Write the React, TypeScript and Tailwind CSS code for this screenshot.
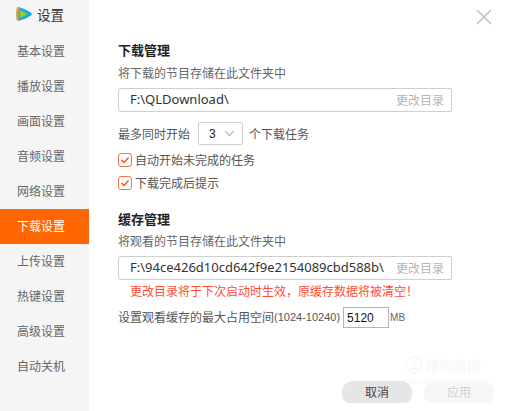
import { X } from "lucide-react";

const navItems = ["基本设置", "播放设置", "画面设置", "音频设置", "网络设置", "下载设置", "上传设置", "热键设置", "高级设置", "自动关机"];

const fontFamily = "font-['Noto_Sans_CJK_SC','Liberation_Sans',sans-serif]";

function PathRow({ path }: { path: string }) {
  return (
    <div className="flex h-[24px] w-[334px] items-center justify-between rounded-[2px] border border-[#cfcfcf] pl-[11px] pr-[7px]">
      <span className="text-[13px] text-[#333] font-['Noto_Sans',sans-serif]">{path}</span>
      <span className="text-[12px] text-[#b5b5b5]">更改目录</span>
    </div>
  );
}

function CheckRow({ label }: { label: string }) {
  return (
    <div className="flex items-center gap-[3px]">
      <span className="flex h-[14px] w-[14px] items-center justify-center rounded-[3px] border border-[#f0734a]">
        <svg width="10" height="10" viewBox="0 0 10 10" fill="none" stroke="#f0582a" strokeWidth="1.5">
          <path d="M1.5 5 L4 7.5 L8.5 2.5" />
        </svg>
      </span>
      <span className="text-[12px] leading-[14px] text-[#555]">{label}</span>
    </div>
  );
}

export default function App() {
  return (
    <div className={`relative flex h-[411px] w-[505px] overflow-hidden bg-white ${fontFamily}`}>
      <aside className="flex h-full w-[89px] flex-col bg-[#f5f5f5]">
        <div className="flex h-[34px] items-center gap-[5px] pb-[6px] pl-[16px]">
          <svg width="16" height="16" viewBox="0 0 16 16">
            <path d="M2.5 1 Q1 1 .8 2.6 Q0 8 .8 13.4 Q1 15 2.8 14.8 Q10 13 15 9.4 Q16.4 8 15 6.6 Q10 3 2.5 1 Z" fill="#1fa4ee" />
            <path d="M2.5 1 Q1 1 .8 2.6 Q0 8 .8 13.4 Q1 15 2.8 14.8 Q2.2 8 3.6 1.3 Z" fill="#f79a1e" />
            <path d="M4 4.2 Q3.6 8 4 11.8 Q8 10.4 11.6 8 Q8 5.6 4 4.2 Z" fill="#8bd42a" />
          </svg>
          <span className="text-[13.5px] text-[#333]">设置</span>
        </div>
        {navItems.map((item) => (
          <div
            key={item}
            className={`flex h-[35px] items-center pb-[2px] pl-[17px] text-[12px] ${item === "下载设置" ? "bg-[#ff6600] text-white" : "text-[#666]"}`}
          >
            {item}
          </div>
        ))}
      </aside>

      <main className="flex flex-1 flex-col pl-[29px] pt-[41px]">
        <h2 className="text-[13px] font-bold leading-[18px] text-[#222]">下载管理</h2>
        <p className="mt-[5px] text-[12px] leading-[18px] text-[#666]">将下载的节目存储在此文件夹中</p>
        <div className="mt-[6px]">
          <PathRow path="F:\QLDownload\" />
        </div>
        <div className="mt-[10px] flex items-center text-[12px] text-[#555]">
          <span className="w-[80px]">最多同时开始</span>
          <div className="flex h-[23px] w-[45px] items-center justify-between rounded-[2px] border border-[#cfcfcf] pl-[10px] pr-[7px] font-['Liberation_Sans',sans-serif] text-[#222]">
            <span>3</span>
            <svg width="11" height="7" viewBox="0 0 11 7" fill="none" stroke="#c4c4c4" strokeWidth="1.6">
              <path d="M1 1 L5.5 5.5 L10 1" />
            </svg>
          </div>
          <span className="ml-[6px]">个下载任务</span>
        </div>
        <div className="mt-[8px] flex flex-col gap-[9px]">
          <CheckRow label="自动开始未完成的任务" />
          <CheckRow label="下载完成后提示" />
        </div>
        <h2 className="mt-[20px] text-[13px] font-bold leading-[18px] text-[#222]">缓存管理</h2>
        <p className="mt-[4px] text-[12px] leading-[18px] text-[#666]">将观看的节目存储在此文件夹中</p>
        <div className="mt-[6px]">
          <PathRow path="F:\94ce426d10cd642f9e2154089cbd588b\" />
        </div>
        <p className="mt-[2px] pl-[12px] text-[12px] leading-[18px] text-[#ff4d33]">更改目录将于下次启动时生效，原缓存数据将被清空！</p>
        <div className="mt-[7px] flex items-center text-[12px] text-[#555]">
          <span className="pb-[1px]">设置观看缓存的最大占用空间</span>
          <span className="font-['Liberation_Sans',sans-serif] text-[11px]">(1024-10240)</span>
          <span className="ml-[3px] flex h-[21px] w-[46px] items-center border border-[#b5b5b5] pl-[3px] font-['Liberation_Sans',sans-serif] text-[12px] text-[#111]">5120</span>
          <span className="ml-[1px] font-['Liberation_Sans',sans-serif] text-[10px] text-[#666]">MB</span>
        </div>
        <div className="mt-auto mb-[8px] flex justify-end gap-[12px] pr-[11px]">
          <button className="h-[22px] w-[70px] rounded-t-[11px] rounded-b-[8px] bg-[#e6e6e6] pb-[1px] text-[12px] leading-[14px] text-[#444]">取消</button>
          <button className="h-[22px] w-[70px] rounded-t-[11px] rounded-b-[8px] bg-[#f7f7f7] pb-[1px] text-[12px] leading-[14px] text-[#d0d0d0]">应用</button>
        </div>
      </main>

      <X className="absolute left-[471px] top-[4px] text-[#c4c4c4]" size={26} strokeWidth={1.5} />

      {/* watermark */}
      <div className="absolute left-[405px] top-[356px] flex flex-col items-start text-[#f8f8f8]">
        <div className="flex items-center gap-[2px]">
          <span className="flex h-[18px] w-[18px] items-center justify-center rounded-full border-2 border-[#f8f8f8] text-[11px] font-bold leading-none">S</span>
          <span className="text-[14px] font-bold leading-none">搜狗指南</span>
        </div>
        <span className="mt-[3px] pl-[2px] font-['Liberation_Sans',sans-serif] text-[9px] leading-[9px] tracking-[0.5px]">zhinan.sogou.com</span>
      </div>
    </div>
  );
}
